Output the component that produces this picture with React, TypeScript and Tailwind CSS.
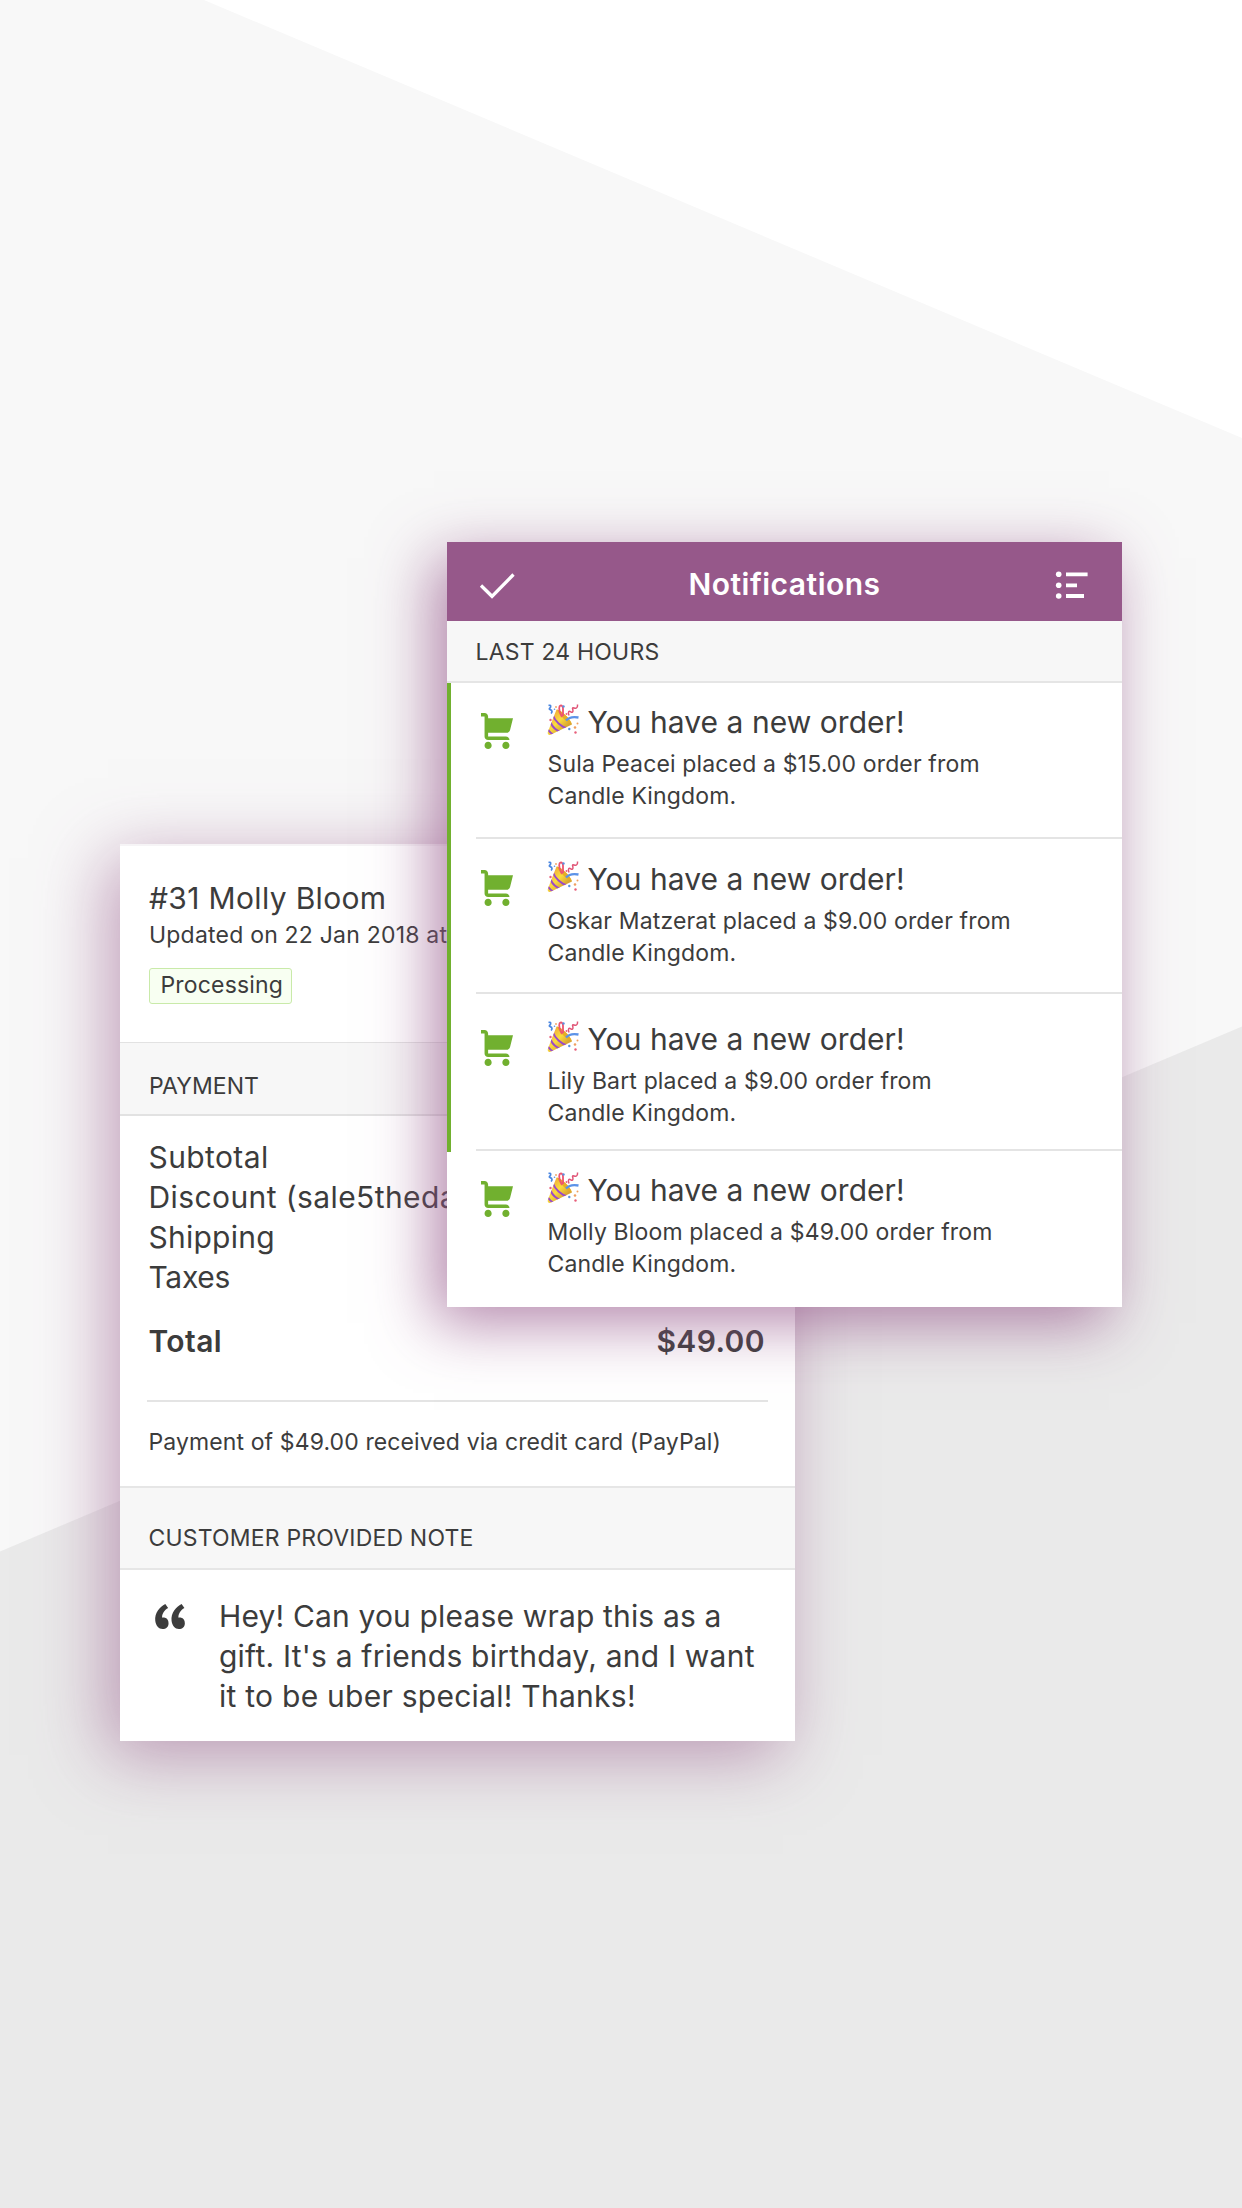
const orders = [
  { text: "Sula Peacei placed a $15.00 order from", row: "h-[156px] pt-[19px] border-b-2" },
  { text: "Oskar Matzerat placed a $9.00 order from", row: "h-[155px] pt-[20px] border-b-2" },
  { text: "Lily Bart placed a $9.00 order from", row: "h-[157px] pt-[25px] border-b-2" },
];

function Backdrop() {
  return (
    <svg className="[grid-area:1/1] h-[2208px] w-[1242px]" viewBox="0 0 1242 2208" aria-hidden="true">
      <path d="M0 0H204L1242 438V2208H0z" fill="#f8f8f8" />
      <path d="M0 1551.5L1242 1026.500V2208H0z" fill="#eaeaea" />
    </svg>
  );
}

function CheckIcon() {
  return (
    <svg className="h-[30px] w-[36px]" viewBox="0 0 36 30" fill="none" stroke="#fff" strokeWidth="3.3" aria-hidden="true">
      <path d="M2 16.500L13 27.300L34.500 5.500" />
    </svg>
  );
}

function ListIcon() {
  return (
    <svg className="h-[30px] w-[36px]" viewBox="0 0 36 30" fill="#fff" aria-hidden="true">
      <circle cx="4.700" cy="5.300" r="2.800" />
      <circle cx="4.700" cy="16.300" r="2.800" />
      <circle cx="4.700" cy="27" r="2.800" />
      <path d="M12 3.500h21.600v3.700H12zM12 14.400h11v3.800H12zM12 25.100h18v3.800H12z" />
    </svg>
  );
}

function CartIcon() {
  return (
    <svg className="mt-[11px] ml-[5px] h-[36px] w-[32px] shrink-0" viewBox="3 2 18 20" preserveAspectRatio="none" fill="#71b02f" aria-hidden="true">
      <path d="M9 20c0 1.100-.9 2-2 2s-2-.9-2-2 .9-2 2-2 2 .9 2 2zm8-2c-1.100 0-2 .9-2 2s.9 2 2 2 2-.9 2-2-.9-2-2-2zm.4-5c.94 0 1.750-.65 1.950-1.570L21 4.900H7V4c0-1.100-.9-2-2-2H3v2h2v11c0 1.100.9 2 2 2h12c0-1.100-.9-2-2-2H7v-2h10.400z" />
    </svg>
  );
}

function PartyIcon() {
  return (
    <svg className="mt-[2px] h-[32px] w-[32px] shrink-0" viewBox="0 0 32 32" fill="none" aria-hidden="true">
      <defs>
        <linearGradient id="cone" x1="6" y1="12" x2="18" y2="24" gradientUnits="userSpaceOnUse">
          <stop offset="0" stopColor="#f3b73c" />
          <stop offset=".45" stopColor="#fbdc3e" />
          <stop offset="1" stopColor="#d9a531" />
        </linearGradient>
        <clipPath id="coneClip">
          <path d="M9.500 5.500C14 6 23 14.500 25 20.500L3.500 30.800C1.500 31.500.3 30 .8 28z" />
        </clipPath>
      </defs>
      <path d="M9.500 5.500C14 6 23 14.500 25 20.500L3.500 30.800C1.500 31.500.3 30 .8 28z" fill="url(#cone)" />
      <g clipPath="url(#coneClip)" stroke="#9a4bc8" strokeWidth="1.900">
        <path d="M6 11.500C8 17 14 23 20.500 24.500" />
        <path d="M3.500 18.500C5.500 23 9 26.500 14 28" />
        <path d="M1 25.500C2.500 28 4 29.500 7 31" />
      </g>
      <path d="M10 5.500C15 7 22.500 13.500 24.800 20C19 17.500 12 11.500 10 5.500z" fill="#e5ad27" />
      <path d="M15 13C13 9 11.500 5 12.500 2.500C13.500.5 16 1.500 16 4.500V12" stroke="#ee5470" strokeWidth="1.800" />
      <path d="M1.500 1.500C4 .5 4.500 3 2.500 4.500C1.500 6 5 5 5 7.500C5 8.500 4.500 9 4 9.500" stroke="#4a86e0" strokeWidth="1.700" />
      <path d="M19 16.500C22 13 26 12.500 31.500 13.500" stroke="#5b93e8" strokeWidth="2.300" />
      <path d="M22 11.500C20.500 7.500 22 6.500 24 8C26 9 26.500 7 25.500 4.500C25.500 2.500 28 5 29.500 4C31 3 30.500 1.500 30.500.5" stroke="#e05577" strokeWidth="1.500" />
      <g fill="#5b8fe0">
        <circle cx="16.500" cy="2.500" r="1.200" />
        <circle cx="22.300" cy="25" r="1.200" />
        <circle cx="7.500" cy="5.300" r=".8" />
      </g>
      <g fill="#e8607c">
        <circle cx="3.500" cy="16" r="1.200" />
        <circle cx="28.500" cy="28.500" r="1.200" />
        <circle cx="19.500" cy="10" r="1" />
      </g>
      <g fill="#f0a060">
        <circle cx="28" cy="23.500" r="1.300" />
        <circle cx="30.500" cy="19.500" r="1" />
        <circle cx="9" cy="3" r=".9" />
      </g>
    </svg>
  );
}

function QuoteIcon() {
  return (
    <svg className="mt-[8px] h-[25px] w-[30px] shrink-0" viewBox="3.700 5 16.600 14" fill="#3c3c3c" aria-hidden="true">
      <path id="mark" d="M11.192 15.757c0-.88-.23-1.618-.69-2.217-.326-.412-.768-.683-1.327-.812-.55-.128-1.070-.137-1.540-.028-.16-.95.1-1.956.76-3.022.66-1.065 1.515-1.867 2.558-2.403L9.373 5c-.8.396-1.560.898-2.260 1.505-.71.607-1.340 1.305-1.900 2.094s-.98 1.680-1.250 2.690-.346 2.040-.217 3.100c.168 1.400.62 2.520 1.356 3.350.735.840 1.652 1.260 2.748 1.260.965 0 1.766-.29 2.400-.878.628-.576.940-1.365.940-2.368z" />
      <use href="#mark" x="9.124" />
    </svg>
  );
}

function OrderRow({ text, row }: { text: string; row: string }) {
  return (
    <li className={`flex border-[#e4e4e4] ${row}`}>
      <CartIcon />
      <div className="ml-[34px]">
        <div className="flex h-[40px]">
          <PartyIcon />
          <h3 className="ml-[8.500px] text-[30px] leading-[40px] tracking-[0.05px]">You have a new order!</h3>
        </div>
        <p className="mt-[6px] ml-[0.5px] text-[23px] leading-[32px] tracking-[0.15px]">
          {text}
          <br />
          Candle Kingdom.
        </p>
      </div>
    </li>
  );
}

function NotificationsCard() {
  return (
    <section className="[grid-area:1/1] mt-[542px] ml-[447px] h-[765px] w-[675px] bg-white shadow-[-13px_16px_58px_rgba(150,88,138,0.72)]">
      <header className="flex h-[79px] items-center justify-between bg-[#96588a] px-[32px] pt-[5px] text-white">
        <CheckIcon />
        <h1 className="text-[30px] leading-[40px] font-semibold tracking-[0.5px]">Notifications</h1>
        <ListIcon />
      </header>
      <h2 className="h-[62px] border-b-2 border-[#e5e5e5] bg-[#f7f7f7] pt-[15px] pl-[28.500px] text-[23px] leading-[32px] tracking-[0.2px]">
        LAST 24 HOURS
      </h2>
      <ul className="h-[469px] border-l-4 border-[#71b02f] pl-[25px]">
        {orders.map((o) => (
          <OrderRow key={o.text} text={o.text} row={o.row} />
        ))}
      </ul>
      <ul className="pl-[29px]">
        <OrderRow text="Molly Bloom placed a $49.00 order from" row="pt-[18px]" />
      </ul>
    </section>
  );
}

function OrderCard() {
  return (
    <section className="[grid-area:1/1] mt-[844px] ml-[120px] h-[897px] w-[675px] bg-white shadow-[-12px_14px_66px_rgba(150,88,138,0.57)]">
      <div className="h-[198px] border-t-2 border-[#f6f4f6] pt-[32px] pl-[29px]">
        <h2 className="text-[30px] leading-[40px] tracking-[0.34px]">#31 Molly Bloom</h2>
        <p className="mt-px text-[23px] leading-[32px] tracking-[0.21px]">Updated on 22 Jan 2018 at</p>
        <span className="mt-[17px] block h-[36px] w-[143px] rounded-[3px] border border-[#c9eaa9] bg-[#f8fff2] pl-[10.500px] text-[23px] leading-[32px] tracking-[0.17px]">
          Processing
        </span>
      </div>
      <h3 className="h-[74px] border-t border-b-2 border-[#e2e2e2] bg-[#f7f7f7] pt-[27px] pl-[29px] text-[23px] leading-[32px] tracking-[0.05px]">
        PAYMENT
      </h3>
      <div className="h-[370px] px-[27px] pt-[21px]">
        <ul className="px-[1.500px] text-[30px] leading-[40px] tracking-[0.4px]">
          <li>Subtotal</li>
          <li>Discount (sale5theday)</li>
          <li className="tracking-[0.25px]">Shipping</li>
          <li className="tracking-[-0.3px]">Taxes</li>
        </ul>
        <div className="mt-[24px] flex h-[81px] justify-between border-b-2 border-[#e4e4e4] pr-[3px] pl-[1.500px] text-[30px] leading-[40px] font-semibold tracking-[0.4px]">
          <span>Total</span>
          <span>$49.00</span>
        </div>
        <p className="mt-[24px] pl-[1.500px] text-[23px] leading-[32px] tracking-[0.11px]">
          Payment of $49.00 received via credit card (PayPal)
        </p>
      </div>
      <h3 className="h-[84px] border-y-2 border-[#e6e6e6] bg-[#f7f7f7] pt-[34px] pl-[28.500px] text-[23px] leading-[32px] tracking-[0.18px]">
        CUSTOMER PROVIDED NOTE
      </h3>
      <div className="flex pt-[26px] pl-[35px]">
        <QuoteIcon />
        <p className="ml-[34px] text-[30px] leading-[40px] tracking-[0.16px] whitespace-nowrap">
          Hey! Can you please wrap this as a
          <br />
          <span className="tracking-[0.22px]">gift. It's a friends birthday, and I want</span>
          <br />
          <span className="tracking-[0.26px]">it to be uber special! Thanks!</span>
        </p>
      </div>
    </section>
  );
}

export default function App() {
  return (
    <main className="grid h-[2208px] w-[1242px] items-start justify-items-start overflow-hidden bg-white font-['Inter',sans-serif] text-[#3c3c3c]">
      <Backdrop />
      <OrderCard />
      <NotificationsCard />
    </main>
  );
}
